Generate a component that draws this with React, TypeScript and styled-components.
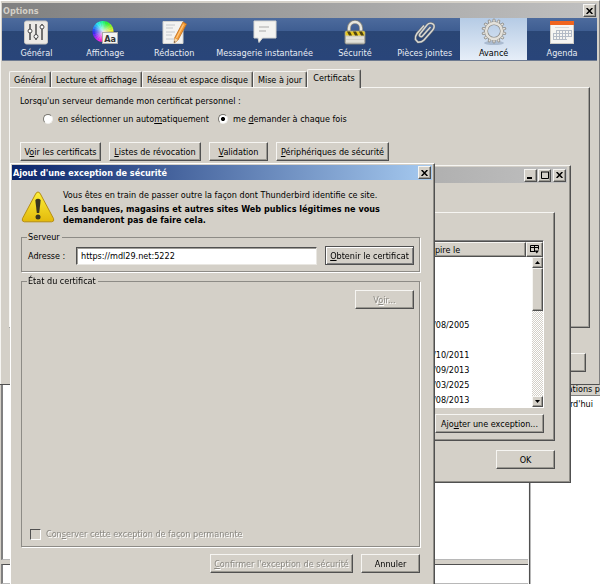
import React from "react";
import styled, { createGlobalStyle, css } from "styled-components";

const face = "#d4d0c8";
const dark = "#808080";
const darker = "#505050";
const light = "#f6f5f2";

const raised = css`
  border: 1px solid;
  border-color: ${light} ${darker} ${darker} ${light};
  box-shadow: inset -1px -1px 0 #9a9891;
`;

const GlobalStyle = createGlobalStyle`
  * { box-sizing: border-box; }
  html, body { margin: 0; padding: 0; }
  body, button, input {
    font-family: "DejaVu Sans Condensed", "DejaVu Sans", sans-serif;
    font-size: 9px;
    line-height: 12px;
    color: #000;
  }
  body { overflow: hidden; }
  u { text-underline-offset: 1px; }
`;

const Desktop = styled.div`
  position: relative;
  min-height: 100vh;
  overflow: hidden;
  background: #fff;
`;

/* ---------- mail window in the background ---------- */
const MailWindow = styled.div`
  display: flex;
  min-height: 100vh;
  padding-top: 384px;
  background: ${face};
`;
const MailMain = styled.div`
  flex: 1;
  display: flex;
  flex-direction: column;
  gap: 4px;
  padding-left: 1px;
`;
const MailPane = styled.div<{ $tall?: boolean }>`
  height: ${(p) => (p.$tall ? "176px" : "auto")};
  flex: ${(p) => (p.$tall ? "none" : "1")};
  background: #fff;
  border: 1px solid;
  border-color: ${dark} #b8b8b8 #b8b8b8 ${dark};
  border-left-width: 2px;
  border-top-color: ${darker};
`;
const TaskPane = styled.div`
  width: 71px;
  border-left: 1px solid ${darker};
  box-shadow: inset 1px 0 0 #b8b8b8;
  background: #fff;
  outline: 1px solid #f6f6f6;
  white-space: nowrap;
`;
const TaskHeader = styled.div`
  height: 12px;
  text-align: right;
  line-height: 10px;
  background: ${face};
  border-bottom: 1px solid ${dark};
`;
const TaskItem = styled.div`
  padding: 2px 7px 0 0;
  text-align: right;
`;

/* ---------- window chrome ---------- */
const OptionsWindow = styled.section`
  position: absolute;
  top: 0;
  left: 0;
  right: 0;
  display: flex;
  flex-direction: column;
  height: 385px;
  padding: 2px 2px 0 2px;
  background: ${face};
  border-top: 1px solid #fff;
  border-right: 1px solid ${dark};
  border-bottom: 1px solid ${darker};
  box-shadow: inset 1px 0 0 ${light};
`;
const ManagerWindow = styled.section`
  position: absolute;
  top: 165px;
  left: 24px;
  right: 29px;
  padding: 1px 3px 13px 2px;
  background: ${face};
  border: 1px solid;
  border-color: ${light} ${darker} ${darker} ${light};
  box-shadow: inset -1px -1px 0 #908e88;
`;
const ExceptionWindow = styled.section`
  position: absolute;
  top: 163px;
  left: 10px;
  width: 425px;
  padding: 1px 2px 12px 1px;
  background: ${face};
  border: 1px solid;
  border-color: #fff ${darker} ${darker} #fff;
  box-shadow: inset -1px 0 0 #908e88;
`;
const TitleBar = styled.header<{ $from: string; $to: string; $h: number; $muted?: boolean }>`
  display: flex;
  align-items: center;
  gap: 1px;
  height: ${(p) => p.$h}px;
  padding: 0 1px;
  background: linear-gradient(to right, ${(p) => p.$from}, ${(p) => p.$to});
  color: ${(p) => (p.$muted ? face : "#fff")};
`;
const Title = styled.h1`
  flex: 1;
  margin: 0;
  font-size: 9px;
  line-height: 12px;
`;
const CaptionButton = styled.button<{ $gap?: boolean }>`
  ${raised}
  display: flex;
  align-items: center;
  justify-content: center;
  width: 13px;
  height: 13px;
  margin-left: ${(p) => (p.$gap ? "1px" : "0")};
  padding: 0;
  background: ${face};
`;

function CloseGlyph() {
  return (
    <svg width="7" height="6" viewBox="0 0 7 6" aria-hidden="true">
      <path d="M.6 0 6.4 6M6.4 0 .6 6" stroke="#000" strokeWidth="1.5" />
    </svg>
  );
}

/* ---------- options toolbar ---------- */
const Toolbar = styled.nav`
  display: grid;
  grid-template-columns: 69fr 69fr 69fr 112fr 69fr 71fr 67fr 70fr;
  height: 43px;
  flex: none;
  background: linear-gradient(#4d6b9d, #3f5e92 30%, #2a4675 31%, #29457a);
  border-bottom: 1px solid #6e7a90;
`;
const Category = styled.button<{ $on?: boolean }>`
  display: flex;
  flex-direction: column;
  align-items: center;
  gap: 2px;
  padding: 2px 0 0;
  border: 0;
  white-space: nowrap;
  background: ${(p) => (p.$on ? "linear-gradient(#b5cbe5, #e6eef8)" : "transparent")};
  color: ${(p) => (p.$on ? "#000" : "#e8edf5")};
`;

const iconProps = { width: 26, height: 25, viewBox: "0 0 26 25", "aria-hidden": true } as const;

function SlidersIcon() {
  return (
    <svg {...iconProps}>
      <rect x="1.5" y="1" width="23" height="23" rx="2" fill="#eceae6" stroke="#c9c7c2" />
      <g stroke="#555" strokeWidth="1.6">
        <path d="M7 4v16M13 4v16M19 4v16" />
      </g>
      <g fill="#fff" stroke="#4a4a4a">
        <circle cx="7" cy="11" r="2" />
        <circle cx="13" cy="16.5" r="2" />
        <circle cx="19" cy="7" r="2" />
      </g>
    </svg>
  );
}
function DisplayIcon() {
  const point = (deg: number) => {
    const r = ((deg - 90) * Math.PI) / 180;
    return `${11 + 10.5 * Math.cos(r)} ${11.5 + 10.5 * Math.sin(r)}`;
  };
  return (
    <svg {...iconProps}>
      <defs>
        <radialGradient id="wheel">
          <stop offset="0" stopColor="#fff" stopOpacity=".85" />
          <stop offset="1" stopColor="#fff" stopOpacity="0" />
        </radialGradient>
      </defs>
      {Array.from({ length: 24 }, (_, i) => (
        <path
          key={i}
          fill={`hsl(${(500 - i * 15) % 360} 90% 56%)`}
          d={`M11 11.5L${point(i * 15)}A10.5 10.5 0 0 1 ${point(i * 15 + 16)}Z`}
        />
      ))}
      <circle cx="11" cy="11.5" r="9" fill="url(#wheel)" />
      <rect x="10.5" y="12.500" width="15" height="11" fill="#f4f4f2" stroke="#aaa" />
      <text x="18" y="21.500" textAnchor="middle" fontSize="9" fontWeight="bold" fill="#333">Aa</text>
    </svg>
  );
}
function ComposeIcon() {
  return (
    <svg {...iconProps}>
      <path d="M2 1.5h20v22H2z" fill="#f3f3f1" stroke="#d2d2ce" />
      <path d="M5 5h9M5 8h7M5 12h9M5 15h6M5 19h8" stroke="#c4c8cc" />
      <path d="M22 2l3.5 2L17 20l-3.800 3 .4-5z" fill="#f39a35" stroke="#c06e1c" strokeWidth=".8" />
      <path d="M22.500 4.500l-7 13.500" stroke="#ffc77d" strokeWidth="1.200" />
      <path d="M13.600 18l3.400 2-3.800 3z" fill="#f0d7b0" />
      <path d="M13.400 21l1 .8-1.200 1.200z" fill="#333" />
    </svg>
  );
}
function ChatIcon() {
  return (
    <svg {...iconProps}>
      <path d="M2 1h22v17H10.500L7 22.500 6 18H2z" fill="#f3f3f1" stroke="#d6d6d2" />
      <path d="M7 7h10M7 11h7" stroke="#a9a9a9" />
    </svg>
  );
}
function LockIcon() {
  return (
    <svg {...iconProps}>
      <path d="M7 12V8a6 6 0 0 1 12 0v4" fill="none" stroke="#85857f" strokeWidth="4" />
      <path d="M7 12V8a6 6 0 0 1 12 0v4" fill="none" stroke="#e8e7df" strokeWidth="2.400" />
      <rect x="3" y="11" width="20" height="13" rx="1.500" fill="#d3d2c9" stroke="#84847c" />
      <path d="M3.500 11.500h19v4h-19z" fill="#e8c81e" />
      <path d="M5 11.500h3l2 4H7zM11 11.500h3l2 4h-3zM17 11.500h3l2 4h-3z" fill="#4d4312" />
      <path d="M4 18h18M4 21h18" stroke="#f2f1ea" />
    </svg>
  );
}
function ClipIcon() {
  const d = "M18.500 7L10.500 16c-1.300 1.600-4 .2-2.600-2L15 5c2.500-3 8-2 7 2.500-.2 1-.8 2-1.500 2.800L12 20c-1.500 1.700-3.500 2.300-6 2.300L3.500 19.500c-.3-2.500 0-4 1.500-6L12 5.500";
  return (
    <svg {...iconProps}>
      <path d={d} fill="none" stroke="#5f6672" strokeWidth="2.600" />
      <path d={d} fill="none" stroke="#d8d8d2" strokeWidth="1.500" />
    </svg>
  );
}
function GearIcon() {
  const teeth = Array.from({ length: 14 }, (_, i) => (i * 360) / 14);
  return (
    <svg {...iconProps} overflow="visible">
      <ellipse cx="13" cy="23" rx="10" ry="2" fill="#8fa2bb" opacity=".6" />
      {teeth.map((a) => (
        <path key={a} d="M11.200 3.500L12.200-1h1.600l1 4.500z" fill="#e4e2dc" stroke="#85837d" strokeWidth=".7" transform={`rotate(${a} 13 11)`} />
      ))}
      <circle cx="13" cy="11" r="7.800" fill="none" stroke="#85837d" strokeWidth="3.600" />
      <circle cx="13" cy="11" r="7.900" fill="none" stroke="#e4e2dc" strokeWidth="2.600" />
    </svg>
  );
}
function AgendaIcon() {
  return (
    <svg {...iconProps}>
      <rect x="1.500" y="1.500" width="23" height="22" fill="#f6f5f2" stroke="#cfccc6" />
      <path d="M1 1h24v4H1z" fill="#f0641e" />
      <path d="M6 7.500h14" stroke="#d7d7d7" />
      <path d="M7 10.500h16M4 13.500h19M4 16.500h19M4 19.500h14M4.500 13v7M7.500 10v10M10.500 10v10M13.500 10v10M16.500 10v10M19.500 10v7M22.500 10v7" stroke="#b4bbc6" />
    </svg>
  );
}

const categories = [
  { label: "Général", Icon: SlidersIcon },
  { label: "Affichage", Icon: DisplayIcon },
  { label: "Rédaction", Icon: ComposeIcon },
  { label: "Messagerie instantanée", Icon: ChatIcon },
  { label: "Sécurité", Icon: LockIcon },
  { label: "Pièces jointes", Icon: ClipIcon },
  { label: "Avancé", Icon: GearIcon, on: true },
  { label: "Agenda", Icon: AgendaIcon },
];

/* ---------- options body ---------- */
const OptionsBody = styled.div`
  flex: 1;
  display: flex;
  flex-direction: column;
  padding: 7px 7px 12px;
`;
const TabStrip = styled.div`
  display: flex;
  align-items: flex-end;
  height: 19px;
`;
const Tab = styled.button<{ $w: number; $on?: boolean }>`
  position: relative;
  z-index: ${(p) => (p.$on ? 1 : 0)};
  width: ${(p) => p.$w}px;
  height: ${(p) => (p.$on ? 19 : 16)}px;
  margin-bottom: ${(p) => (p.$on ? "-1px" : "0")};
  padding: 0 0 ${(p) => (p.$on ? "2px" : "0")};
  white-space: nowrap;
  background: ${face};
  border: 1px solid;
  border-color: ${light} ${darker} transparent ${light};
  border-bottom: 0;
  border-radius: 2px 2px 0 0;
  box-shadow: inset -1px 0 0 #9a9891;
`;
const TabPanel = styled.div`
  height: 241px;
  padding: 7px 10px;
  border: 1px solid;
  border-color: ${light} ${darker} ${darker} ${light};
  box-shadow: inset -1px -1px 0 #a09e98;
`;
const Lead = styled.p`
  margin: 0;
`;
const RadioRow = styled.div`
  display: flex;
  padding: 6px 0 0 23px;
`;
const RadioLabel = styled.label<{ $w: number }>`
  display: flex;
  align-items: center;
  gap: 5px;
  width: ${(p) => p.$w}px;
  white-space: nowrap;
`;
const Radio = styled.input`
  appearance: none;
  flex: none;
  width: 10px;
  height: 10px;
  margin: 0;
  border-radius: 50%;
  border: 1px solid;
  border-color: #77756f #f0efec #f0efec #77756f;
  background: #fff;
  &:checked {
    background: radial-gradient(circle, #000 0 1px, #000 1.800px, #fff 2.300px);
  }
`;
const ButtonRow = styled.div<{ $top: number; $end?: boolean }>`
  display: flex;
  gap: 8px;
  justify-content: ${(p) => (p.$end ? "flex-end" : "flex-start")};
  padding-top: ${(p) => p.$top}px;
`;
const PushButton = styled.button<{ $w: number; $default?: boolean }>`
  ${raised}
  min-width: ${(p) => p.$w}px;
  height: 19px;
  padding: 0 1px;
  white-space: nowrap;
  background: ${face};
  ${(p) =>
    p.$default &&
    css`
      border-color: ${darker};
      box-shadow: inset 1px 1px 0 #fff, inset -1px -1px 0 ${dark};
    `}
  &:disabled {
    color: #8b8983;
    text-shadow: 1px 1px 0 #fff;
  }
`;
const OptionsFooter = styled.div`
  display: flex;
  justify-content: flex-end;
  margin-top: auto;
  padding-right: 4px;
`;

/* ---------- certificate manager ---------- */
const ManagerPanel = styled.div`
  margin: 29px 12px 0 8px;
  padding: 27px 10px 7px;
  border: 1px solid;
  border-color: ${light} ${darker} ${darker} ${light};
  box-shadow: inset -1px -1px 0 #908e88;
`;
const Tree = styled.div`
  display: grid;
  grid-template-columns: 1fr 11px;
  border: 1px solid;
  border-color: ${dark} #fff #fff ${dark};
`;
const TreeHead = styled.div`
  grid-column: 1 / -1;
  display: grid;
  grid-template-columns: 1fr 102px 17px;
  height: 16px;
  border-top: 1px solid ${darker};
`;
const HeadCell = styled.div`
  ${raised}
  display: flex;
  align-items: center;
  justify-content: flex-start;
  background: ${face};
`;
const PickerButton = styled.button`
  ${raised}
  display: flex;
  align-items: center;
  justify-content: center;
  padding: 0;
  background: ${face};
`;
const CertTable = styled.table`
  width: 100%;
  border-collapse: collapse;
  background: #fff;
  td {
    height: 15px;
    padding: 0;
  }
  td:last-child {
    width: 99px;
  }
`;
const ScrollTrack = styled.div`
  display: flex;
  flex-direction: column;
  background: repeating-conic-gradient(#fff 0 25%, ${face} 0 50%) 0 0 / 2px 2px;
`;
const ScrollThumb = styled.div`
  ${raised}
  height: 43px;
  background: ${face};
`;
const ScrollButton = styled.button<{ $end?: boolean }>`
  ${raised}
  display: flex;
  align-items: center;
  justify-content: center;
  height: 11px;
  margin-top: ${(p) => (p.$end ? "auto" : "0")};
  padding: 0;
  background: ${face};
`;
const ManagerFooter = styled.div`
  display: flex;
  justify-content: flex-end;
  padding: 9px 12px 0 0;
`;
const expiry = ["", "", "", "", "/08/2005", "", "/10/2011", "/09/2013", "/03/2025", "/08/2013"];

/* ---------- exception dialog ---------- */
const DialogBody = styled.div`
  padding: 7px 12px 0 9px;
`;
const Warning = styled.div`
  display: grid;
  grid-template-columns: 34px 1fr;
  column-gap: 8px;
  align-items: center;
`;
const WarningText = styled.div`
  padding-top: 2px;
  p {
    margin: 0 0 3px;
  }
  strong {
    display: block;
    line-height: 11px;
  }
`;
const Group = styled.fieldset<{ $top: number; $h?: number }>`
  display: flex;
  flex-direction: column;
  min-width: 0;
  height: ${(p) => (p.$h ? `${p.$h}px` : "auto")};
  margin: ${(p) => p.$top}px 0 0;
  padding: 3px 5px 6px;
  border: 1px solid #8d8b86;
  box-shadow: 1px 1px 0 #fff;
  legend {
    margin: 0;
    padding: 0 2px 0 1px;
    background: ${face};
  }
`;
const AddressRow = styled.div`
  display: grid;
  grid-template-columns: 40px 1fr auto;
  column-gap: 8px;
  align-items: center;
  padding-left: 1px;
  white-space: nowrap;
`;
const AddressInput = styled.input`
  min-width: 0;
  width: 100%;
  height: 18px;
  padding: 0 4px;
  background: #fff;
  border: 1px solid;
  border-color: ${darker} #e9e7e2 #e9e7e2 ${darker};
  box-shadow: inset 1px 1px 0 #a09e98;
  outline: 0;
`;
const KeepLabel = styled.label`
  display: flex;
  align-items: center;
  gap: 5px;
  margin-top: auto;
  padding-left: 3px;
  color: #8b8983;
  text-shadow: 1px 1px 0 #fff;
`;
const KeepBox = styled.input`
  appearance: none;
  width: 11px;
  height: 11px;
  margin: 0;
  border: 1px solid;
  border-color: ${darker} #fff #fff ${darker};
  background: ${face};
`;

function WarningIcon() {
  return (
    <svg width="34" height="32" viewBox="0 0 34 32" aria-hidden="true">
      <defs>
        <linearGradient id="warn" x1="0" y1="0" x2="0" y2="1">
          <stop offset="0" stopColor="#fdf03a" />
          <stop offset="1" stopColor="#e3b90b" />
        </linearGradient>
      </defs>
      <path d="M15 2.200q2-2.600 4 0l13.600 25.500q1 2.800-2 3.100H3.400q-3-.3-2-3.100z" fill="url(#warn)" stroke="#b68d12" />
      <path d="M14.300 9q2.700-2.400 5.400 0l-1.500 13h-2.400z" fill="#3a3520" />
      <circle cx="17" cy="26" r="2.500" fill="#3a3520" />
    </svg>
  );
}

export default function App() {
  return (
    <>
      <GlobalStyle />
      <Desktop>
        <MailWindow>
          <MailMain>
            <MailPane $tall />
            <MailPane />
          </MailMain>
          <TaskPane>
            <TaskHeader>ations p</TaskHeader>
            <TaskItem>Aujourd'hui</TaskItem>
          </TaskPane>
        </MailWindow>

        <OptionsWindow aria-label="Options">
          <TitleBar $from="#808080" $to="#c0c0c0" $h={15} $muted>
            <Title>Options</Title>
            <CaptionButton aria-label="Fermer"><CloseGlyph /></CaptionButton>
          </TitleBar>
          <Toolbar>
            {categories.map(({ label, Icon, on }) => (
              <Category key={label} $on={on}>
                <Icon />
                {label}
              </Category>
            ))}
          </Toolbar>
          <OptionsBody>
            <TabStrip role="tablist">
              <Tab role="tab" $w={42}>Général</Tab>
              <Tab role="tab" $w={91}>Lecture et affichage</Tab>
              <Tab role="tab" $w={111}>Réseau et espace disque</Tab>
              <Tab role="tab" $w={54}>Mise à jour</Tab>
              <Tab role="tab" $w={54} $on aria-selected="true">Certificats</Tab>
            </TabStrip>
            <TabPanel role="tabpanel">
              <Lead>Lorsqu'un serveur demande mon certificat personnel :</Lead>
              <RadioRow>
                <RadioLabel $w={175}>
                  <Radio type="radio" name="ask" />
                  <span>en sélectionner un auto<u>m</u>atiquement</span>
                </RadioLabel>
                <RadioLabel $w={140}>
                  <Radio type="radio" name="ask" defaultChecked />
                  <span>me <u>d</u>emander à chaque fois</span>
                </RadioLabel>
              </RadioRow>
              <ButtonRow $top={17}>
                <PushButton $w={81}>V<u>o</u>ir les certificats</PushButton>
                <PushButton $w={92}><u>L</u>istes de révocation</PushButton>
                <PushButton $w={59}><u>V</u>alidation</PushButton>
                <PushButton $w={113}><u>P</u>ériphériques de sécurité</PushButton>
              </ButtonRow>
            </TabPanel>
            <OptionsFooter>
              <PushButton $w={58} aria-label="Aide" />
            </OptionsFooter>
          </OptionsBody>
        </OptionsWindow>

        <ManagerWindow aria-label="Gestionnaire de certificats">
          <TitleBar $from="#808080" $to="#c0c0c0" $h={16}>
            <Title />
            <CaptionButton aria-label="Réduire">
              <svg width="7" height="7" viewBox="0 0 7 7"><path d="M0 6h5" stroke="#000" strokeWidth="2" /></svg>
            </CaptionButton>
            <CaptionButton aria-label="Agrandir">
              <svg width="8" height="8" viewBox="0 0 8 8"><path d="M.5 1v6.500h7V1M0 1h8" fill="none" stroke="#000" /></svg>
            </CaptionButton>
            <CaptionButton aria-label="Fermer" $gap><CloseGlyph /></CaptionButton>
          </TitleBar>
          <ManagerPanel>
            <Tree>
              <TreeHead>
                <HeadCell />
                <HeadCell>Expire le</HeadCell>
                <PickerButton aria-label="Colonnes">
                  <svg width="9" height="9" viewBox="0 0 9 9">
                    <path d="M.5 6.500v-6h8v4M.5 2.500h8M4.500 0v6.500M0 6.500h5" fill="none" stroke="#000" />
                    <path d="M4.500 5.500H9L6.800 8.500z" />
                  </svg>
                </PickerButton>
              </TreeHead>
              <CertTable>
                <tbody>
                  {expiry.map((date, i) => (
                    <tr key={i}>
                      <td />
                      <td>{date}</td>
                    </tr>
                  ))}
                </tbody>
              </CertTable>
              <ScrollTrack>
                <ScrollButton aria-label="Haut">
                  <svg width="5" height="3" viewBox="0 0 5 3"><path d="M0 3h5L2.500 0z" /></svg>
                </ScrollButton>
                <ScrollThumb />
                <ScrollButton aria-label="Bas" $end>
                  <svg width="5" height="3" viewBox="0 0 5 3"><path d="M0 0h5L2.500 3z" /></svg>
                </ScrollButton>
              </ScrollTrack>
            </Tree>
            <ButtonRow $top={6} $end>
              <PushButton $w={109}>Ajo<u>u</u>ter une exception...</PushButton>
            </ButtonRow>
          </ManagerPanel>
          <ManagerFooter>
            <PushButton $w={59}>OK</PushButton>
          </ManagerFooter>
        </ManagerWindow>

        <ExceptionWindow role="dialog" aria-label="Ajout d'une exception de sécurité">
          <TitleBar $from="#0a246a" $to="#a6caf0" $h={15}>
            <Title>Ajout d'une exception de sécurité</Title>
            <CaptionButton aria-label="Fermer"><CloseGlyph /></CaptionButton>
          </TitleBar>
          <DialogBody>
            <Warning>
              <WarningIcon />
              <WarningText>
                <p>Vous êtes en train de passer outre la façon dont Thunderbird identifie ce site.</p>
                <strong>
                  Les banques, magasins et autres sites Web publics légitimes ne vous
                  <br />
                  demanderont pas de faire cela.
                </strong>
              </WarningText>
            </Warning>
            <Group $top={5}>
              <legend>Serveur</legend>
              <AddressRow>
                <label htmlFor="address">Adresse :</label>
                <AddressInput id="address" defaultValue="https://mdl29.net:5222" autoFocus />
                <PushButton $w={89} $default><u>O</u>btenir le certificat</PushButton>
              </AddressRow>
            </Group>
            <Group $top={3} $h={272}>
              <legend>État du certificat</legend>
              <ButtonRow $top={0} $end>
                <PushButton $w={59} disabled>V<u>o</u>ir...</PushButton>
              </ButtonRow>
              <KeepLabel>
                <KeepBox type="checkbox" disabled />
                <span>Con<u>s</u>erver cette exception de façon permanente</span>
              </KeepLabel>
            </Group>
            <ButtonRow $top={7} $end>
              <PushButton $w={143} disabled><u>C</u>onfirmer l'exception de sécurité</PushButton>
              <PushButton $w={59}>Annuler</PushButton>
            </ButtonRow>
          </DialogBody>
        </ExceptionWindow>
      </Desktop>
    </>
  );
}
